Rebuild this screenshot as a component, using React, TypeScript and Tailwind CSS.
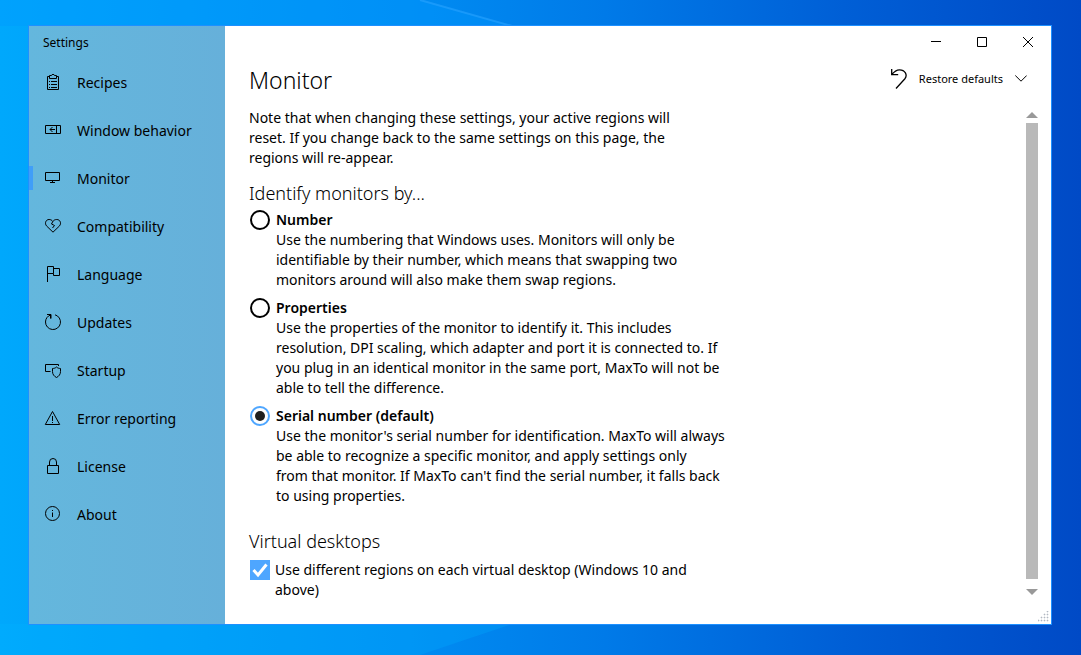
import { useState } from "react";
import type { ReactNode } from "react";

const stroke = { fill: "none", stroke: "currentColor", strokeWidth: 1 };

function Icon({ children }: { children: ReactNode }) {
  return (
    <svg viewBox="0 0 16 16" className="size-4 shrink-0 overflow-visible" aria-hidden="true" {...stroke}>
      {children}
    </svg>
  );
}

const navItems: { label: string; icon: ReactNode }[] = [
  {
    label: "Recipes",
    icon: (
      <>
        <path d="M4.5 2.5h-2v13h11v-13h-2" />
        <path d="M4.5 4.5v-3h2C6.500 0 9.500 0 9.500 1.500h2v3z" />
        <path d="M4 7.500h1M6 7.500h6M4 10.500h1M6 10.500h6M4 13.500h1M6 13.500h6" />
      </>
    ),
  },
  {
    label: "Window behavior",
    icon: <path d="M.5 3.500h15v8H.5zM11.500 3.500v8M10 7.500H5M7.500 5L5 7.500 7.500 10" />,
  },
  { label: "Monitor", icon: <path d="M.5 2.500h14v8H.5zM7.500 10.500v2M5 12.500h5" /> },
  {
    label: "Compatibility",
    icon: (
      <path d="M8 14.200L1.500 7.900C-.6 5.300.8 1.500 4.100 1.500c1.700 0 2.900.8 3.700 2L6.500 6l3 1.500L7.500 10M7.800 3.500c.9-1.300 2.300-2 3.900-2 3.500 0 5 3.800 2.800 6.400L8 14.200" />
    ),
  },
  { label: "Language", icon: <path d="M2.500 16V.5h6v7h-6M8.500 2.500h6v7h-6v-2" /> },
  { label: "Updates", icon: <path d="M5.500 1v3.500M2 .5h4v4M5.500 1C2.500 2 .5 4.700.5 8a7.500 7.500 0 1 0 9.500-7.200" /> },
  {
    label: "Startup",
    icon: (
      <>
        <path d="M13.500 4V2.500H.5v7h5" />
        <path d="M11.500 5c-1 1-2.500 1.500-4 1.500v3c0 2.700 1.500 4.800 4 6 2.500-1.200 4-3.300 4-6v-3c-1.500 0-3-.5-4-1.500z" />
      </>
    ),
  },
  { label: "Error reporting", icon: <path d="M7.500 1.500L14.700 14.500H.3zM7.500 6v5M7.500 12v1" /> },
  { label: "License", icon: <path d="M2.500 7.500h11v8h-11zM4.500 7.500V4a3.500 3.500 0 0 1 7 0v3.500" /> },
  {
    label: "About",
    icon: (
      <>
        <circle cx="7.500" cy="7.500" r="7" />
        <path d="M7.500 6.500V11M7.500 4v1" />
      </>
    ),
  },
];

const identifyOptions = [
  {
    id: "number",
    title: "Number",
    text: "Use the numbering that Windows uses. Monitors will only be identifiable by their number, which means that swapping two monitors around will also make them swap regions.",
  },
  {
    id: "properties",
    title: "Properties",
    text: "Use the properties of the monitor to identify it. This includes resolution, DPI scaling, which adapter and port it is connected to. If you plug in an identical monitor in the same port, MaxTo will not be able to tell the difference.",
  },
  {
    id: "serial",
    title: "Serial number (default)",
    text: "Use the monitor's serial number for identification. MaxTo will always be able to recognize a specific monitor, and apply settings only from\u00a0that monitor. If MaxTo can't find the serial number, it falls back to using properties.",
  },
];

function Sidebar() {
  return (
    <aside className="flex w-[196px] shrink-0 flex-col bg-linear-to-r from-[#64b7dd] to-[#66b0da]">
      <h2 className="h-8 pl-3.5 text-[12px] leading-[34px]">Settings</h2>
      <nav>
        <ul>
          {navItems.map((item) => (
            <li key={item.label}>
              <a
                href={"#" + item.label}
                aria-current={item.label === "Monitor" ? "page" : undefined}
                className="group flex h-12 items-center"
              >
                <span className="h-6 w-1 group-aria-[current=page]:bg-[#409ef8]" />
                <span className="flex items-center gap-4 pl-3">
                  <Icon>{item.icon}</Icon>
                  <span className="pt-0.5">{item.label}</span>
                </span>
              </a>
            </li>
          ))}
        </ul>
      </nav>
    </aside>
  );
}

function TitleBar() {
  return (
    <div className="flex h-8 justify-end">
      <button aria-label="Minimize" className="flex w-[46px] items-center justify-center">
        <svg viewBox="0 0 10 10" className="size-2.5" {...stroke}>
          <path d="M0 4.500h10" />
        </svg>
      </button>
      <button aria-label="Maximize" className="flex w-[46px] items-center justify-center">
        <svg viewBox="0 0 10 10" className="size-2.5" {...stroke}>
          <path d="M.5.5h9v9h-9z" />
        </svg>
      </button>
      <button aria-label="Close" className="flex w-[46px] items-center justify-center">
        <svg viewBox="0 0 10 10" className="size-2.5 overflow-visible" {...stroke}>
          <path d="M0 0l10 10M10 0L0 10" />
        </svg>
      </button>
    </div>
  );
}

function ScrollBar() {
  return (
    <div className="mr-[13px] flex w-3 shrink-0 flex-col items-center pt-[9px] pb-[5px]" aria-hidden="true">
      <svg viewBox="0 0 12 6" className="h-1.5 w-3 shrink-0">
        <path d="M0 6L6 0l6 6z" fill="#999" />
      </svg>
      <div className="mt-[5px] mb-2.5 w-3 grow bg-[#b9b9b9]" />
      <svg viewBox="0 0 12 6" className="h-1.5 w-3 shrink-0">
        <path d="M0 0l6 6 6-6z" fill="#999" />
      </svg>
    </div>
  );
}

function Wallpaper() {
  return (
    <svg
      viewBox="0 0 1081 655"
      preserveAspectRatio="none"
      className="absolute inset-0 -z-10 size-full"
      aria-hidden="true"
    >
      <defs>
        <linearGradient id="wall" x1="0" y1="0" x2="1" y2="0">
          <stop offset="0" stopColor="#00a8fc" />
          <stop offset=".38" stopColor="#008cf2" />
          <stop offset=".56" stopColor="#007ae8" />
          <stop offset=".78" stopColor="#005fd6" />
          <stop offset="1" stopColor="#004ac6" />
        </linearGradient>
      </defs>
      <path d="M0 0h1081v655H0z" fill="url(#wall)" />
      <path d="M420 0L512 26H0V0z" fill="#0098ff" fillOpacity=".35" />
      <path d="M420 0L512 26" stroke="#28a4ff" strokeOpacity=".6" strokeWidth="2" />
      <path d="M0 624h512L420 655H0z" fill="#00b4ff" fillOpacity=".25" />
    </svg>
  );
}

export default function App() {
  const [method, setMethod] = useState("serial");
  const [perDesktop, setPerDesktop] = useState(true);

  return (
    <div className="relative isolate flex min-h-screen bg-[#0078e8] pt-[25px] pr-[29px] pb-[30px] pl-7 font-['Noto_Sans','Open_Sans',sans-serif] text-[14px] leading-5 text-black">
      <Wallpaper />
      <div className="flex grow border border-[#1e90ff]">
        <Sidebar />
        <div className="relative flex min-w-0 grow flex-col bg-white">
          <TitleBar />
          <header className="flex h-[45px] items-center justify-between pb-0.5 pl-6">
            <h1 className="text-[23px] leading-8 font-light">Monitor</h1>
            <button className="mr-6 mb-0.5 flex items-center text-[11px]">
              <svg viewBox="0 0 16 20" className="mr-3 h-5 w-4" fill="none" stroke="currentColor" strokeWidth="1.3">
                <path d="M.7 0v5.700h6.500M.7 5.700C3 2.700 5.300.8 8.500.8c5.500 0 8.500 5.200 5.200 9.200L5 19.500" />
              </svg>
              Restore defaults
              <svg viewBox="0 0 12 7" className="ml-3 h-[7px] w-3" {...stroke}>
                <path d="M.3.5L6 6.200 11.700.5" />
              </svg>
            </button>
          </header>
          <div className="mb-6 flex grow">
            <main className="min-w-0 grow pt-[5px] pl-6">
              <p className="max-w-[440px]">
                Note that when changing these settings, your active regions will reset. If you change back to the same
                settings on this page, the regions will re-appear.
              </p>
              <fieldset className="mt-3">
                <legend className="text-[18px] leading-[26px] font-light">Identify monitors by...</legend>
                <div className="mt-1 flex flex-col gap-2">
                  {identifyOptions.map((option) => (
                    <div key={option.id} className="flex gap-1.5 pl-px">
                      <input
                        type="radio"
                        name="identify"
                        id={option.id}
                        checked={method === option.id}
                        onChange={() => setMethod(option.id)}
                        aria-describedby={option.id + "-text"}
                        className="grid size-5 shrink-0 appearance-none place-content-center rounded-full border-2 border-black before:size-2.5 before:rounded-full checked:border-[#4ea6ff] checked:before:bg-[#1f1f1f]"
                      />
                      <div>
                        <label htmlFor={option.id} className="block font-semibold">
                          {option.title}
                        </label>
                        <p id={option.id + "-text"} className="max-w-[456px]">
                          {option.text}
                        </p>
                      </div>
                    </div>
                  ))}
                </div>
              </fieldset>
              <section className="mt-[22px]">
                <h2 className="text-[18px] leading-[26px] font-light">Virtual desktops</h2>
                <div className="mt-1.5 flex gap-[5px] pl-px">
                  <span className="grid size-5 shrink-0">
                    <input
                      type="checkbox"
                      id="virtual"
                      checked={perDesktop}
                      onChange={(e) => setPerDesktop(e.target.checked)}
                      className="peer col-start-1 row-start-1 size-5 appearance-none border-2 border-black checked:border-[#4ea6ff] checked:bg-[#4ea6ff]"
                    />
                    <svg
                      viewBox="0 0 20 20"
                      className="pointer-events-none invisible col-start-1 row-start-1 size-5 peer-checked:visible"
                      fill="none"
                      stroke="#fff"
                      strokeWidth="3"
                    >
                      <path d="M3.500 10L8 15 16.500 4.500" />
                    </svg>
                  </span>
                  <label htmlFor="virtual" className="max-w-[430px]">
                    Use different regions on each virtual desktop (Windows 10 and above)
                  </label>
                </div>
              </section>
            </main>
            <ScrollBar />
          </div>
          <svg viewBox="0 0 11 11" className="absolute right-0.5 bottom-0.5 size-[11px]" fill="#b4b8c2" aria-hidden="true">
            <path d="M9 0h1v1h-1zM6 3h1v1h-1zM9 3h1v1h-1zM3 6h1v1h-1zM6 6h1v1h-1zM9 6h1v1h-1zM0 9h1v1h-1zM3 9h1v1h-1zM6 9h1v1h-1zM9 9h1v1h-1z" stroke="#b4b8c2" strokeWidth=".6" />
          </svg>
        </div>
      </div>
    </div>
  );
}
